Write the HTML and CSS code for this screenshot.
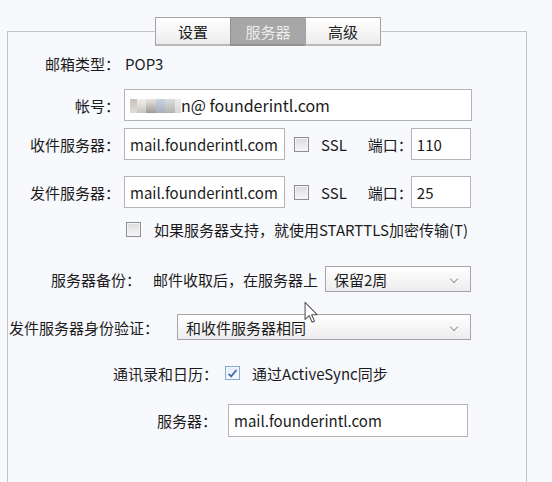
FILE: index.html
```html
<!DOCTYPE html>
<html lang="zh-CN">

<head>
    <meta charset="UTF-8">
    <meta name="viewport" content="width=device-width, initial-scale=1.0">
    <title>账户设置</title>
    <link rel="stylesheet" href="styles.css">
</head>

<body>
    <main class="window">
        <nav class="tabs">
            <div class="tab">设置</div>
            <div class="tab active">服务器</div>
            <div class="tab">高级</div>
        </nav>

        <section class="panel">
            <div class="row row-type">
                <span class="label">邮箱类型：</span>
                <span class="value">POP3</span>
            </div>

            <div class="row row-account">
                <span class="label">帐号：</span>
                <div class="input input-account">
                    <span class="blur">
                        <i class="px px1"></i><i class="px px2"></i><i class="px px3"></i><i class="px px4"></i><i class="px px5"></i><i class="px px6"></i>
                    </span>
                    <span>n@ founderintl.com</span>
                </div>
            </div>

            <div class="row row-in">
                <span class="label">收件服务器：</span>
                <div class="input input-host">mail.founderintl.com</div>
                <span class="check"></span>
                <span class="ssl">SSL</span>
                <span class="port-label">端口：</span>
                <div class="input input-port">110</div>
            </div>

            <div class="row row-out">
                <span class="label">发件服务器：</span>
                <div class="input input-host">mail.founderintl.com</div>
                <span class="check"></span>
                <span class="ssl">SSL</span>
                <span class="port-label">端口：</span>
                <div class="input input-port">25</div>
            </div>

            <div class="row row-tls">
                <span class="check"></span>
                <span class="check-text">如果服务器支持，就使用STARTTLS加密传输(T)</span>
            </div>

            <div class="row row-backup">
                <span>服务器备份：</span>
                <span class="backup-text">邮件收取后，在服务器上</span>
                <div class="select select-backup">保留2周</div>
            </div>

            <div class="row row-auth">
                <span>发件服务器身份验证：</span>
                <div class="select select-auth">和收件服务器相同</div>
            </div>

            <div class="row row-sync">
                <span>通讯录和日历：</span>
                <span class="check checked">
                    <svg width="11" height="11" viewBox="0 0 11 11">
                        <path d="M1.5 5.8 L4.2 8.4 L9.5 2" fill="none" stroke="#3d6fae" stroke-width="1.8" />
                    </svg>
                </span>
                <span class="check-text">通过ActiveSync同步</span>
            </div>

            <div class="row row-server">
                <span>服务器：</span>
                <div class="input input-server">mail.founderintl.com</div>
            </div>
        </section>

        <svg class="cursor" width="15" height="24" viewBox="0 0 14 22">
            <path d="M1 1 L1 17 L4.8 13.4 L7.6 19.6 L9.8 18.6 L7.1 12.6 L12.2 12.6 Z" fill="#fff" stroke="#555" stroke-width="1" stroke-linejoin="round" />
        </svg>
    </main>
</body>

</html>
```

FILE: styles.css
```css
* {
    padding: 0;
    margin: 0;
    box-sizing: border-box;
}

html,
body {
    height: 100%;
    overflow: hidden;
}

body {
    background-color: #f7f9fd;
    color: #1b1b1b;
    font-family: "Noto Sans CJK SC", "Noto Sans", sans-serif;
    font-size: 15px;
}

.window {
    position: relative;
    padding-top: 17px;
}

/* tab strip sits on the panel's top border */
.tabs {
    position: relative;
    z-index: 1;
    display: flex;
    margin-left: 155px;
}

.tab {
    width: 76px;
    height: 29px;
    margin-left: -1px;
    border: 1px solid #a3a3a3;
    border-bottom: 2px solid #b9b9b9;
    background: linear-gradient(#ffffff, #ececec);
    display: flex;
    justify-content: center;
    align-items: center;
    line-height: 1;
}

.tab:first-child {
    margin-left: 0;
}

.tab.active {
    background: #a7a7a7;
    border-color: #8f8f8f;
    border-bottom-color: #929292;
    color: #ececec;
}

.panel {
    margin-top: -15px;
    margin-left: 7px;
    width: 520px;
    height: 470px;
    border: 1px solid #c4c4c4;
    border-bottom: none;
    display: flex;
    flex-direction: column;
}

.row {
    display: flex;
    align-items: center;
    line-height: 1;
}

.label {
    width: 112px;
    text-align: right;
}

.input {
    height: 32px;
    margin-left: 4px;
    padding: 0 5px;
    border: 1px solid #b4b4b4;
    background-color: #fff;
    display: flex;
    align-items: center;
    font-size: 15px;
    white-space: nowrap;
}

.row-type {
    height: 26px;
    margin-top: 18px;
}

.value {
    margin-left: 5px;
}

.row-account {
    margin-top: 13px;
}

.input-account {
    width: 348px;
    font-size: 16px;
}

.blur {
    display: flex;
    height: 14px;
    margin-top: 2px;
}

.px {
    display: block;
    height: 100%;
}

.px1 {
    width: 7px;
    background: linear-gradient(#c9c2b8, #e2ddd6);
}

.px2 {
    width: 9px;
    background: linear-gradient(#f2f0ee, #c8c4c0);
}

.px3 {
    width: 10px;
    background: linear-gradient(#e8e6e4, #9f9a96);
}

.px4 {
    width: 9px;
    background: linear-gradient(#c8d4e2, #a8aeb8);
}

.px5 {
    width: 10px;
    background: linear-gradient(#dcdedf, #b4b2b0);
}

.px6 {
    width: 6px;
    background: linear-gradient(#f0efee, #d8d6d4);
}

.row-in {
    margin-top: 7px;
}

.row-out {
    margin-top: 16px;
}

.input-host {
    width: 161px;
}

.input-port {
    width: 60px;
    margin-left: 0;
}

.check {
    width: 15px;
    height: 15px;
    margin-left: 9px;
    border: 1px solid #8d8f91;
    background: linear-gradient(#dcdcdc, #f6f6f6);
    box-shadow: inset 0 0 0 1px #f4f4f4;
    display: flex;
    justify-content: center;
    align-items: center;
}

.check.checked {
    border-color: #8aa9cf;
    background: linear-gradient(#e4ecf6, #ffffff);
    box-shadow: inset 0 0 0 1px #f2f6fb;
}

.ssl {
    margin-left: 12px;
}

.port-label {
    width: 43px;
    margin-left: 21px;
    white-space: nowrap;
}

.row-tls {
    height: 21px;
    margin-top: 11px;
    padding-left: 118px;
}

.row-tls .check {
    margin-left: 0;
}

.check-text {
    margin-left: 13px;
}

.row-backup {
    margin-top: 26px;
    padding-left: 43px;
}

.backup-text {
    margin-left: 12px;
}

.select {
    position: relative;
    height: 26px;
    padding-left: 8px;
    border: 1px solid #a5a5a5;
    background: linear-gradient(#ffffff, #ededed);
    display: flex;
    align-items: center;
}

/* chevron on the right of a drop-down */
.select::after {
    content: "";
    position: absolute;
    right: 13px;
    top: 9px;
    width: 5px;
    height: 5px;
    border-right: 1.5px solid #9a9a9a;
    border-bottom: 1.5px solid #9a9a9a;
    transform: rotate(45deg);
}

.select-backup {
    width: 146px;
    margin-left: 7px;
}

.row-auth {
    margin-top: 22px;
    padding-left: 1px;
}

.select-auth {
    width: 294px;
    margin-left: 18px;
}

.row-sync {
    height: 22px;
    margin-top: 22px;
    padding-left: 105px;
}

.row-sync .check {
    margin-left: 7px;
    width: 15px;
    height: 14px;
}

.row-sync .check-text {
    margin-left: 12px;
}

.row-server {
    margin-top: 20px;
    padding-left: 149px;
}

.input-server {
    width: 240px;
    height: 33px;
    margin-left: 11px;
}

.cursor {
    position: absolute;
    left: 304px;
    top: 301px;
}
```
